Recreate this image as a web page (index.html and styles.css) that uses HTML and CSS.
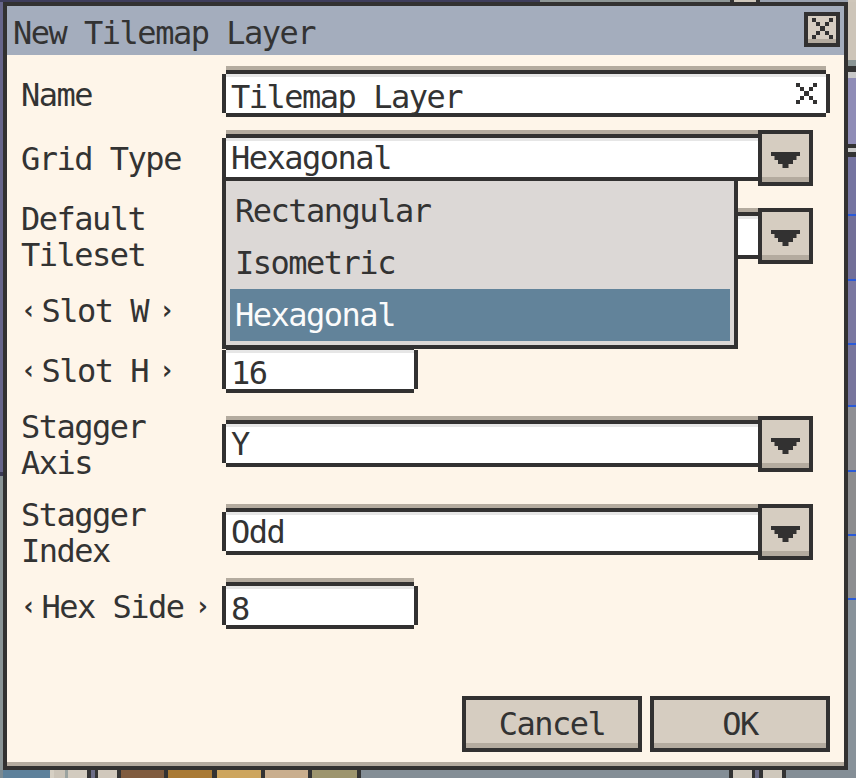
FILE: index.html
```html
<!DOCTYPE html>
<html lang="en">
<head>
<meta charset="utf-8">
<title>New Tilemap Layer</title>
<link rel="stylesheet" href="styles.css">
</head>
<body>
<div class="desk">
  <div class="desk-top"></div>
  <div class="desk-mid">
    <div class="desk-left"></div>

    <section class="dialog">
      <header class="titlebar">
        <h1 class="title">New Tilemap Layer</h1>
        <button type="button" class="close-btn" aria-label="Close">
          <svg class="icon-x" viewBox="0 0 5 5" aria-hidden="true"><path d="M0 0h1v1H0zM4 0h1v1H4zM1 1h1v1H1zM3 1h1v1H3zM2 2h1v1H2zM1 3h1v1H1zM3 3h1v1H3zM0 4h1v1H0zM4 4h1v1H4z"/></svg>
        </button>
      </header>

      <div class="dialog-body">
        <div class="form">
          <div class="row">
            <span class="label">Name</span>
            <div class="entry entry-wide">
              <span>Tilemap Layer</span>
              <svg class="icon-x clear-x" viewBox="0 0 5 5" aria-hidden="true"><path d="M0 0h1v1H0zM4 0h1v1H4zM1 1h1v1H1zM3 1h1v1H3zM2 2h1v1H2zM1 3h1v1H1zM3 3h1v1H3zM0 4h1v1H0zM4 4h1v1H4z"/></svg>
            </div>
          </div>

          <div class="row">
            <span class="label">Grid Type</span>
            <div class="combo">
              <div class="entry">Hexagonal</div>
              <div class="drop-btn"><svg class="caret" viewBox="0 0 29 16" aria-hidden="true"><path d="M0 0h29v4h-3.5v4H22v4h-4.5v4h-6v-4H7V8H3.5V4H0z"/></svg></div>
              <ul class="menu">
                <li class="menu-item">Rectangular</li>
                <li class="menu-item">Isometric</li>
                <li class="menu-item is-selected">Hexagonal</li>
              </ul>
            </div>
          </div>

          <div class="row">
            <span class="label">Default<br>Tileset</span>
            <div class="combo">
              <div class="entry"></div>
              <div class="drop-btn"><svg class="caret" viewBox="0 0 29 16" aria-hidden="true"><path d="M0 0h29v4h-3.5v4H22v4h-4.5v4h-6v-4H7V8H3.5V4H0z"/></svg></div>
            </div>
          </div>

          <div class="row">
            <span class="label"><span class="nudge">‹</span>Slot W<span class="nudge nudge-r">›</span></span>
            <div class="entry entry-short"></div>
          </div>

          <div class="row">
            <span class="label"><span class="nudge">‹</span>Slot H<span class="nudge nudge-r">›</span></span>
            <div class="entry entry-short">16</div>
          </div>

          <div class="row">
            <span class="label">Stagger<br>Axis</span>
            <div class="combo">
              <div class="entry">Y</div>
              <div class="drop-btn"><svg class="caret" viewBox="0 0 29 16" aria-hidden="true"><path d="M0 0h29v4h-3.5v4H22v4h-4.5v4h-6v-4H7V8H3.5V4H0z"/></svg></div>
            </div>
          </div>

          <div class="row">
            <span class="label">Stagger<br>Index</span>
            <div class="combo">
              <div class="entry">Odd</div>
              <div class="drop-btn"><svg class="caret" viewBox="0 0 29 16" aria-hidden="true"><path d="M0 0h29v4h-3.5v4H22v4h-4.5v4h-6v-4H7V8H3.5V4H0z"/></svg></div>
            </div>
          </div>

          <div class="row">
            <span class="label"><span class="nudge">‹</span>Hex Side<span class="nudge nudge-r">›</span></span>
            <div class="entry entry-short">8</div>
          </div>
        </div>

        <div class="actions">
          <button type="button" class="btn">Cancel</button>
          <button type="button" class="btn">OK</button>
        </div>
      </div>
    </section>

    <div class="desk-right"></div>
  </div>
  <div class="palette"></div>
</div>
</body>
</html>
```

FILE: styles.css
```css
* {
  box-sizing: border-box;
}

:root {
  --ink: #323131;
  --cream: #fef5e9;
  --title: #a4adbd;
  --shade: #b4ab9f;
  --face: #d6cdc1;
  --hilite: #e6e6e6;
  --menu: #dcd8d6;
  --select: #62839a;
  --text: #333333;
}

html,
body {
  margin: 0;
}

body {
  width: 856px;
  height: 778px;
  overflow: hidden;
  background: #848e96;
  font-family: "DejaVu Sans Mono", "Liberation Mono", monospace;
  font-size: 32px;
  letter-spacing: -1.5px;
  color: var(--text);
}

button {
  font: inherit;
  letter-spacing: inherit;
  color: inherit;
  margin: 0;
  appearance: none;
  cursor: pointer;
}

/* ---------- workspace behind the dialog ---------- */

.desk {
  display: flex;
  flex-direction: column;
  height: 778px;
}

.desk-top {
  height: 2px;
  background: linear-gradient(to right,
    #3e3d5b 0 540px, #8e9696 540px 730px, #333 730px 734px,
    #cfc8bc 734px 756px, #333 756px 760px, #9aa2b0 760px 848px, #cfc7bb 848px);
}

.desk-mid {
  display: flex;
  height: 768px;
}

.desk-left {
  width: 3px;
  background: linear-gradient(#66658a 0 470px, #3b3a55 470px 474px, #8a9496 474px);
}

.desk-right {
  width: 8px;
  background: linear-gradient(
    #cdc5b9 0 58px, #8a9595 58px 64px, #333 64px 70px, #c8c8c8 70px 76px,
    #8f8cb6 76px 142px, #333 142px 146px, #c9c9c9 146px 150px, #333 150px 155px,
    #7574a0 155px 212px, #2a5ad8 212px 214px, #726f98 214px 277px, #2a5ad8 277px 279px,
    #7a77a0 279px 341px, #2a5ad8 341px 343px, #77759c 343px 403px, #2a5ad8 403px 405px,
    #8f8f94 405px 468px, #2a5ad8 468px 470px, #8c8c8e 470px 532px, #2a5ad8 532px 534px,
    #8d8e90 534px 596px, #2a5ad8 596px 598px, #88929a 598px);
}

.palette {
  height: 8px;
  background: linear-gradient(to right,
    #7b8a92 0 3px, #5e819b 3px 50px, #d6d0c4 50px 54px, #cbc4b8 54px 65px,
    #9aa3a0 65px 68px, #d2cbbf 68px 87px, #333 87px 91px, #6b6c86 91px 95px,
    #333 95px 98px, #d0c8bc 98px 117px, #333 117px 121px, #805c3f 121px 164px,
    #333 164px 168px, #a97a35 168px 212px, #333 212px 217px, #cda55e 217px 261px,
    #333 261px 265px, #c9ae8e 265px 308px, #333 308px 312px, #9d956e 312px 357px,
    #333 357px 361px, #848e96 361px 729px, #333 729px 733px, #cfc8bc 733px 752px,
    #333 752px 755px, #6b6c86 755px 759px, #333 759px 763px, #cfc8bc 763px 782px,
    #333 782px 786px, #848e96 786px);
}

/* ---------- dialog frame ---------- */

.dialog {
  width: 845px;
  height: 768px;
  border: 4px solid var(--ink);
  background: var(--cream);
  display: flex;
  flex-direction: column;
}

.titlebar {
  height: 49px;
  flex: none;
  background: var(--title);
  display: flex;
  justify-content: space-between;
  align-items: flex-start;
  padding: 0 4px 0 6px;
}

.title {
  margin: 9px 0 0;
  font: inherit;
  line-height: 36px;
  font-weight: normal;
}

.close-btn {
  width: 36px;
  height: 35px;
  margin-top: 6px;
  padding: 2px 0 0;
  border: 4px solid var(--ink);
  background: var(--face);
  box-shadow: inset 0 -4px 0 var(--shade);
  display: flex;
  justify-content: center;
  align-items: flex-start;
}

.icon-x {
  width: 21px;
  height: 21px;
  fill: var(--ink);
  shape-rendering: crispEdges;
  flex: none;
}

.dialog-body {
  flex: 1;
  display: flex;
  flex-direction: column;
  padding: 11px 14px 10px;
  border-bottom: 4px solid var(--shade);
}

/* ---------- form rows ---------- */

.form {
  display: grid;
  grid-template-rows: 64px 78px 74px 60px 74px 88px 74px 57px;
}

.row {
  height: 57px;
  display: grid;
  grid-template-columns: 201px auto;
  grid-template-rows: 57px;
  justify-content: start;
  align-items: center;
}

.label {
  line-height: 36px;
  white-space: nowrap;
  align-self: unsafe center;
}

/* drag handles around numeric labels */
.nudge {
  display: inline-block;
  width: 20.5px;
  font-size: 26px;
  font-weight: bold;
  letter-spacing: 0;
  vertical-align: 3px;
}

.nudge-r {
  width: 12px;
  margin-left: 11px;
}

/* text entry: shade strip on top, pixel frame with clipped corners */
.entry {
  --r: 4px;
  align-self: start;
  height: 51px;
  padding: 13px 9px 0;
  line-height: 36px;
  white-space: nowrap;
  overflow: hidden;
  background:
    linear-gradient(var(--shade), var(--shade)) 4px 0 / calc(100% - 4px - var(--r)) 4px,
    linear-gradient(var(--ink), var(--ink)) 4px 4px / calc(100% - 4px - var(--r)) 4px,
    linear-gradient(var(--hilite), var(--hilite)) 4px 8px / calc(100% - 4px - var(--r)) 3px,
    linear-gradient(var(--ink), var(--ink)) 4px 100% / calc(100% - 4px - var(--r)) 4px,
    linear-gradient(var(--ink), var(--ink)) 0 8px / 4px calc(100% - 12px),
    linear-gradient(var(--ink), var(--ink)) 100% 8px / var(--r) calc(100% - 12px),
    linear-gradient(#fff, #fff) 4px 8px / calc(100% - 4px - var(--r)) calc(100% - 12px);
  background-repeat: no-repeat;
}

.entry-wide {
  width: 608px;
  display: flex;
  justify-content: space-between;
  align-items: flex-start;
  padding-right: 13px;
}

.clear-x {
  margin-top: 4px;
}

.entry-short {
  width: 196px;
}

/* combo box: entry + drop button, popup list below */
.combo {
  position: relative;
  align-self: start;
  display: flex;
  width: 591px;
}

.combo .entry {
  --r: 0px;
  width: 536px;
  padding-top: 10px;
}

.drop-btn {
  width: 55px;
  height: 56px;
  border: 4px solid var(--ink);
  background: var(--face);
  box-shadow: inset 0 -5px 0 var(--shade);
  display: flex;
  justify-content: center;
  align-items: flex-start;
  padding-top: 18px;
}

.caret {
  width: 29px;
  height: 16px;
  fill: var(--ink);
}

.menu {
  position: absolute;
  left: 0;
  top: 47px;
  z-index: 5;
  width: 516px;
  margin: 0;
  padding: 4px;
  list-style: none;
  border: 4px solid var(--ink);
  background: var(--menu);
}

.menu-item {
  height: 52px;
  line-height: 52px;
  padding-left: 5px;
  white-space: nowrap;
}

.menu-item.is-selected {
  background: var(--select);
  color: #fbfbfb;
}

/* ---------- buttons ---------- */

.actions {
  margin-top: auto;
  display: flex;
  justify-content: flex-end;
  gap: 8px;
}

.btn {
  width: 180px;
  height: 56px;
  padding: 6px 0 0;
  border: 4px solid var(--ink);
  background: var(--face);
  box-shadow: inset 0 -5px 0 var(--shade);
  line-height: 36px;
  display: flex;
  justify-content: center;
  align-items: flex-start;
}
```
